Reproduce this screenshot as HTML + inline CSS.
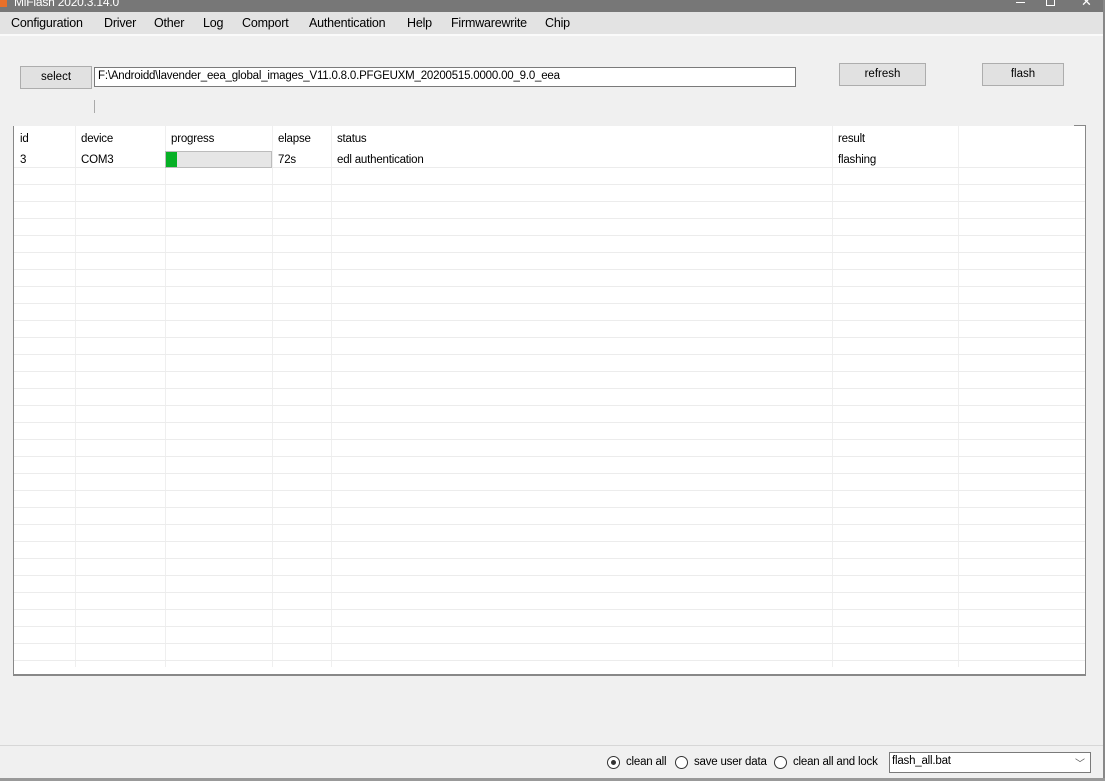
<!DOCTYPE html>
<html><head><style>
*{margin:0;padding:0;box-sizing:border-box}
body{width:1105px;height:781px;background:#f0f0f0;font-family:"Liberation Sans",sans-serif;font-size:11.5px;color:#000;position:relative;overflow:hidden}
.a{position:absolute}
.t{position:absolute;white-space:nowrap;letter-spacing:-0.2px}
.btn{position:absolute;background:#e1e1e1;border:1px solid #adadad;text-align:center;font-size:11.5px}
.menu span{position:absolute;top:16px;font-size:12.5px;letter-spacing:-0.2px;white-space:nowrap}
</style></head><body>
<div class="a" style="left:0;top:0;width:1105px;height:12px;background:#777"></div>
<div class="t" style="left:14px;top:-5px;color:#fff;font-size:12px">MiFlash 2020.3.14.0</div>
<div class="a" style="left:0;top:0;width:7px;height:7px;background:#e8702a"></div>
<div class="a" style="left:1016px;top:2px;width:9px;height:1px;background:#fff"></div>
<div class="a" style="left:1046px;top:0;width:9px;height:6px;border:1px solid #fff;border-top:none"></div>
<div class="t" style="left:1081px;top:-6px;color:#fff;font-size:13px">✕</div>
<div class="a" style="left:0;top:12px;width:1105px;height:22px;background:#e3e3e3"></div>
<div class="a" style="left:0;top:34px;width:1105px;height:2px;background:#fafafa"></div>
<div class="menu">
<span style="left:11px">Configuration</span><span style="left:104px">Driver</span><span style="left:154px">Other</span><span style="left:203px">Log</span><span style="left:242px">Comport</span><span style="left:309px">Authentication</span><span style="left:407px">Help</span><span style="left:451px">Firmwarewrite</span><span style="left:545px">Chip</span>
</div>
<div class="btn" style="left:20px;top:66px;width:72px;height:23px;line-height:21px">select</div>
<div class="a" style="left:94px;top:67px;width:702px;height:20px;background:#fff;border:1px solid #7a7a7a"></div>
<div class="t" style="left:98px;top:70px">F:\Androidd\lavender_eea_global_images_V11.0.8.0.PFGEUXM_20200515.0000.00_9.0_eea</div>
<div class="btn" style="left:839px;top:63px;width:87px;height:23px;line-height:21px">refresh</div>
<div class="btn" style="left:982px;top:63px;width:82px;height:23px;line-height:21px">flash</div>
<div class="a" style="left:94px;top:100px;width:1px;height:13px;background:#aaa"></div>
<div class="a" style="left:1074px;top:125px;width:12px;height:1px;background:#888"></div>
<div class="a" style="left:13px;top:126px;width:1073px;height:550px;background:#fff;border-left:1px solid #888;border-right:1px solid #888;border-bottom:2px solid #888"></div>
<svg class="a" style="left:14px;top:126px" width="1071" height="548">
<g stroke="#efefef" stroke-width="1">
<line x1="61.5" y1="0" x2="61.5" y2="541"/><line x1="151.5" y1="0" x2="151.5" y2="541"/><line x1="258.5" y1="0" x2="258.5" y2="541"/><line x1="317.5" y1="0" x2="317.5" y2="541"/><line x1="818.5" y1="0" x2="818.5" y2="541"/><line x1="944.5" y1="0" x2="944.5" y2="541"/>
</g>
</svg>
<svg class="a" style="left:14px;top:0" width="1071" height="700">
<g stroke="#ececec">
<line x1="0" x2="1071" y1="167.5" y2="167.5"/><line x1="0" x2="1071" y1="184.5" y2="184.5"/><line x1="0" x2="1071" y1="201.5" y2="201.5"/><line x1="0" x2="1071" y1="218.5" y2="218.5"/><line x1="0" x2="1071" y1="235.5" y2="235.5"/><line x1="0" x2="1071" y1="252.5" y2="252.5"/><line x1="0" x2="1071" y1="269.5" y2="269.5"/><line x1="0" x2="1071" y1="286.5" y2="286.5"/><line x1="0" x2="1071" y1="303.5" y2="303.5"/><line x1="0" x2="1071" y1="320.5" y2="320.5"/><line x1="0" x2="1071" y1="337.5" y2="337.5"/><line x1="0" x2="1071" y1="354.5" y2="354.5"/><line x1="0" x2="1071" y1="371.5" y2="371.5"/><line x1="0" x2="1071" y1="388.5" y2="388.5"/><line x1="0" x2="1071" y1="405.5" y2="405.5"/><line x1="0" x2="1071" y1="422.5" y2="422.5"/><line x1="0" x2="1071" y1="439.5" y2="439.5"/><line x1="0" x2="1071" y1="456.5" y2="456.5"/><line x1="0" x2="1071" y1="473.5" y2="473.5"/><line x1="0" x2="1071" y1="490.5" y2="490.5"/><line x1="0" x2="1071" y1="507.5" y2="507.5"/><line x1="0" x2="1071" y1="524.5" y2="524.5"/><line x1="0" x2="1071" y1="541.5" y2="541.5"/><line x1="0" x2="1071" y1="558.5" y2="558.5"/><line x1="0" x2="1071" y1="575.5" y2="575.5"/><line x1="0" x2="1071" y1="592.5" y2="592.5"/><line x1="0" x2="1071" y1="609.5" y2="609.5"/><line x1="0" x2="1071" y1="626.5" y2="626.5"/><line x1="0" x2="1071" y1="643.5" y2="643.5"/><line x1="0" x2="1071" y1="660.5" y2="660.5"/>
</g>
</svg>
<div class="t" style="left:20px;top:133px">id</div>
<div class="t" style="left:81px;top:133px">device</div>
<div class="t" style="left:171px;top:133px">progress</div>
<div class="t" style="left:278px;top:133px">elapse</div>
<div class="t" style="left:337px;top:133px">status</div>
<div class="t" style="left:838px;top:133px">result</div>
<div class="t" style="left:20px;top:154px">3</div>
<div class="t" style="left:81px;top:154px">COM3</div>
<div class="a" style="left:165px;top:151px;width:107px;height:17px;background:#e6e6e6;border:1px solid #bcbcbc"></div>
<div class="a" style="left:166px;top:152px;width:11px;height:15px;background:#06b025"></div>
<div class="t" style="left:278px;top:154px">72s</div>
<div class="t" style="left:337px;top:154px">edl authentication</div>
<div class="t" style="left:838px;top:154px">flashing</div>
<div class="a" style="left:0;top:745px;width:1105px;height:1px;background:#d7d7d7"></div>
<div class="a" style="left:1103px;top:0;width:2px;height:781px;background:#888"></div>
<div class="a" style="left:0;top:778px;width:1105px;height:3px;background:#999"></div>
<div class="a" style="left:607px;top:756px;width:13px;height:13px;border:1px solid #333;border-radius:50%;background:#fff"></div>
<div class="a" style="left:611px;top:760px;width:5px;height:5px;border-radius:50%;background:#333"></div>
<div class="t" style="left:626px;top:756px">clean all</div>
<div class="a" style="left:675px;top:756px;width:13px;height:13px;border:1px solid #333;border-radius:50%;background:#fff"></div>
<div class="t" style="left:694px;top:756px">save user data</div>
<div class="a" style="left:774px;top:756px;width:13px;height:13px;border:1px solid #333;border-radius:50%;background:#fff"></div>
<div class="t" style="left:793px;top:756px">clean all and lock</div>
<div class="a" style="left:889px;top:752px;width:202px;height:21px;background:#fff;border:1px solid #7a7a7a"></div>
<div class="t" style="left:892px;top:755px">flash_all.bat</div>
<div class="t" style="left:1075px;top:755px;font-size:10px;color:#555">﹀</div>
</body></html>
